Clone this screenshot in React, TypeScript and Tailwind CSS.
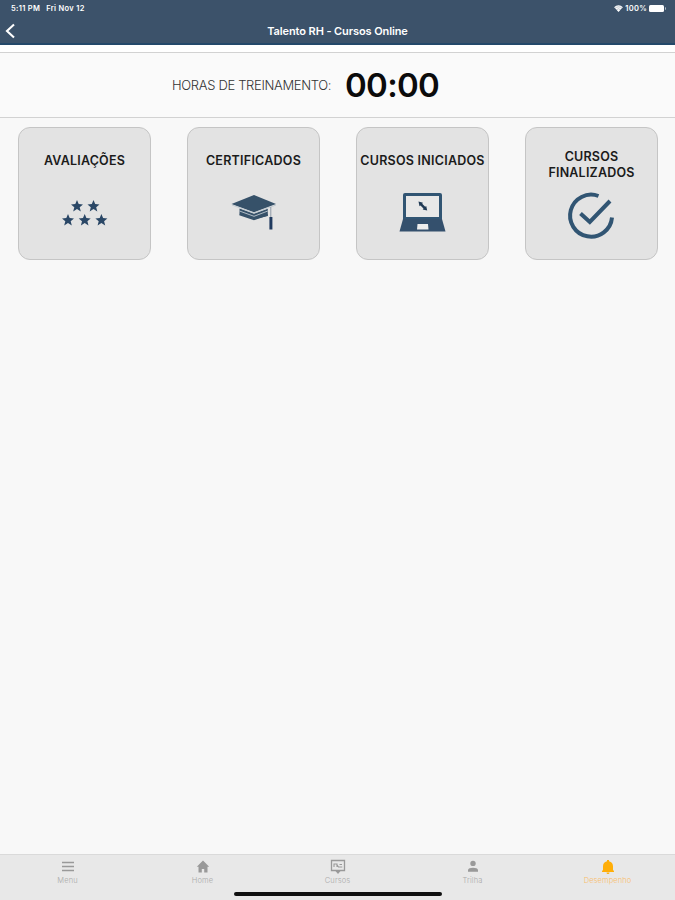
import type { ReactNode } from 'react'

interface CourseCard {
  id: string
  label: ReactNode
  labelClass: string
  icon: ReactNode
}

interface Tab {
  label: string
  icon: ReactNode
  active?: boolean
}

const STAR = 'M6 0l1.7 4.1 4.3.3-3.3 2.8 1.1 4.2L6 9.1l-3.8 2.3 1.1-4.2L0 4.4l4.3-.3z'

const CARDS: CourseCard[] = [
  { id: 'ratings', label: 'AVALIAÇÕES', labelClass: 'pt-[25px] tracking-[0.2px]', icon: <StarsIcon /> },
  { id: 'certificates', label: 'CERTIFICADOS', labelClass: 'pt-[25px] tracking-[0.25px]', icon: <CapIcon /> },
  { id: 'started', label: 'CURSOS INICIADOS', labelClass: 'pt-[25px] tracking-[0.25px]', icon: <LaptopIcon /> },
  { id: 'finished', label: <>CURSOS<br />FINALIZADOS</>, labelClass: 'pt-[21px] tracking-[0.2px]', icon: <CheckIcon /> },
]

const TABS: Tab[] = [
  { label: 'Menu', icon: <MenuIcon /> },
  { label: 'Home', icon: <HomeIcon /> },
  { label: 'Cursos', icon: <BoardIcon /> },
  { label: 'Trilha', icon: <PersonIcon /> },
  { label: 'Desempenho', icon: <BellIcon />, active: true },
]

export default function App() {
  return (
    <div className="flex h-[900px] w-[675px] flex-col overflow-hidden bg-[#f8f8f8] font-['Inter',sans-serif] text-[#1b1b1b]">
      <Header />
      <TrainingHours />
      <main className="flex flex-1 items-start gap-9 pt-[9px] pl-[18px]">
        {CARDS.map((card) => (
          <button key={card.id} type="button" className="relative flex size-[133px] shrink-0 flex-col items-center rounded-[12px] border border-[#c5c5c5] bg-[#e3e3e3]">
            <span className={`whitespace-nowrap text-center text-[12.5px] leading-[15.5px] font-semibold ${card.labelClass}`}>{card.label}</span>
            <span className="absolute top-[62px] left-[42px]">{card.icon}</span>
          </button>
        ))}
      </main>
      <TabBar />
    </div>
  )
}

function Header() {
  return (
    <header className="h-[45px] shrink-0 border-b-2 border-[#24496a] bg-[#3c526a] text-white">
      <div className="flex h-[17px] items-center justify-between pr-[9px] pl-[11px] text-[7.5px] font-semibold">
        <div className="flex gap-[6px] tracking-[0.3px]">
          <span>5:11 PM</span>
          <span>Fri Nov 12</span>
        </div>
        <div className="flex items-center gap-[2px]">
          <WifiIcon />
          <span className="tracking-[0.3px]">100%</span>
          <BatteryIcon />
        </div>
      </div>
      <div className="grid h-[28px] grid-cols-[20px_1fr_20px] items-center">
        <button type="button" aria-label="Voltar" className="pl-[5px]"><BackIcon /></button>
        <h1 className="text-center text-[11px] leading-none font-semibold tracking-[-0.1px]">Talento RH - Cursos Online</h1>
      </div>
    </header>
  )
}

function TrainingHours() {
  return (
    <section className="h-[73px] shrink-0 border-b border-[#d2d2d2] bg-white pt-[7px]">
      <div className="flex h-full items-center border-t border-[#d2d2d2] bg-[#fafafa] pl-[172px]">
        <span className="w-[173px] whitespace-nowrap pt-[1px] text-[13px] font-light tracking-[-0.33px] text-[#333]">HORAS DE TREINAMENTO:</span>
        <span className="text-[33px] leading-none font-semibold tracking-[-0.7px] text-[#0b0b0b]">00:00</span>
      </div>
    </section>
  )
}

function TabBar() {
  return (
    <footer className="relative h-[46px] shrink-0 border-t border-[#dadada] bg-[#e8e8e8]">
      <nav className="grid grid-cols-5">
        {TABS.map((tab) => (
          <button
            key={tab.label}
            type="button"
            aria-current={tab.active ? 'page' : undefined}
            className={`flex flex-col items-center pt-[4px] ${tab.active ? 'text-[#ffae08]' : 'text-[#999]'}`}
          >
            {tab.icon}
            <span className={`mt-[1px] text-[7.5px] leading-[9px] font-light tracking-[0.1px] ${tab.active ? 'text-[#f8bd68]' : 'text-[#aaa]'}`}>{tab.label}</span>
          </button>
        ))}
      </nav>
      <div className="absolute bottom-[4px] left-[234px] h-[4px] w-[208px] rounded-full bg-[#101010]" />
    </footer>
  )
}

function BackIcon() { return <svg aria-hidden="true" viewBox="0 0 10 16" className="h-4 w-[10px]" fill="none" stroke="currentColor" strokeWidth="2.1"><path d="M9 1.5 2 8l7 6.5"/></svg> }
function WifiIcon() { return <svg aria-hidden="true" viewBox="0 0 10 8" className="h-[7px] w-[9px]" fill="currentColor"><path d="M0 2.5a7 7 0 0 1 10 0L5 8z"/><path d="M1 3.8a5.6 5.6 0 0 1 8 0M2.6 5.4a3.5 3.5 0 0 1 4.8 0" fill="none" stroke="#3c526a" strokeWidth=".4"/></svg> }
function BatteryIcon() { return <svg aria-hidden="true" viewBox="0 0 17 7" className="h-[7px] w-[17px]" fill="currentColor"><rect width="15" height="7" rx="1.5"/><path d="M16 2.2a1.3 1.3 0 0 1 0 2.6z" opacity=".6"/></svg> }

function StarsIcon() {
  return (
    <svg aria-hidden="true" viewBox="0 0 48 48" className="size-12" fill="#2a4766">
      <path transform="translate(10 10)" d={STAR} />
      <path transform="translate(26.5 10)" d={STAR} />
      <path transform="translate(1 24)" d={STAR} />
      <path transform="translate(17.7 24)" d={STAR} />
      <path transform="translate(34.4 24)" d={STAR} />
    </svg>
  )
}

function CapIcon() {
  return (
    <svg aria-hidden="true" viewBox="0 0 48 48" className="size-12" fill="#365169">
      <path d="M1.5 14 24 5l22 9-22 8.2z" />
      <path d="m9.5 18.6 14.5 5.2 13.8-5V26L24 29.3 9.5 24.5z" />
      <path d="m9.5 21 14.5 5.3L37.8 21M2 15l22 8 22-8" fill="none" stroke="#bdc7cf" strokeWidth=".9" />
      <path d="M9.5 24.5 24 29.5l13.8-4.7" fill="none" stroke="#365169" strokeWidth="1.5" />
      <path d="M40.8 17v10.5" fill="none" stroke="#8693a0" strokeWidth=".9" />
      <path d="M39.4 27h3v12.5h-3z" fill="#203a5f" />
    </svg>
  )
}

function LaptopIcon() {
  return (
    <svg aria-hidden="true" viewBox="0 0 48 48" className="size-12">
      <rect x="4" y="3" width="39" height="28" rx="2" fill="#315573" />
      <path d="M7 6h33v21H7z" fill="#e8e8e8" />
      <path d="M4 29h39l3.5 12.5H.5z" fill="#34506d" />
      <path d="M18.5 34H29l.5 5.5H18z" fill="#eee" />
      <path d="m19.5 11.5 4.5 1.3-.8 1 3 3 1-.8 1 4.5-4.5-1 .8-1-3-3-1 .8z" fill="#203a55" />
    </svg>
  )
}

function CheckIcon() {
  return (
    <svg aria-hidden="true" viewBox="0 0 48 48" className="size-12 translate-y-px overflow-visible" fill="none" stroke="#315573" strokeWidth="4">
      <path d="M30.5 5A21 21 0 1 0 44 26.5" />
      <path d="m12.5 22.5 9.3 8.5L42 10" />
    </svg>
  )
}

function MenuIcon() { return <svg aria-hidden="true" viewBox="0 0 16 16" className="size-4" fill="none" stroke="currentColor" strokeWidth="1.5"><path d="M2 3.5h12M2 7.5h12M2 11.5h12"/></svg> }
function HomeIcon() { return <svg aria-hidden="true" viewBox="0 0 16 16" className="size-4" fill="currentColor"><path d="M8 1.5 1.8 7.7h1.7v5.8h3.3V10h2.4v3.5h3.3V7.7h1.7z"/></svg> }
function BoardIcon() { return <svg aria-hidden="true" viewBox="0 0 16 16" className="size-4" fill="none" stroke="currentColor"><path d="M1.5 1.5h13v10h-13z" strokeWidth="1.3"/><path d="M4 8V5h3v3M6.5 5l2 3h3.8M9.5 5.5h2.5" strokeWidth="1.1"/><path d="M5.5 12h5L8 15z" fill="currentColor" stroke="none"/></svg> }
function PersonIcon() { return <svg aria-hidden="true" viewBox="0 0 16 16" className="size-4" fill="currentColor"><circle cx="8" cy="4.4" r="2.7"/><path d="M3 12.7v-1.5c0-3.2 10-3.2 10 0v1.5z"/></svg> }
function BellIcon() { return <svg aria-hidden="true" viewBox="0 0 16 16" className="size-4" fill="currentColor"><path d="M7 2.2V1h2v1.2c2.7.6 4 2.5 4 5v3.5L14 12.2v.8H2v-.8l1-1.5V7.2c0-2.5 1.3-4.4 4-5zM6.5 13.5h3a1.5 1.5 0 0 1-3 0z"/></svg> }
